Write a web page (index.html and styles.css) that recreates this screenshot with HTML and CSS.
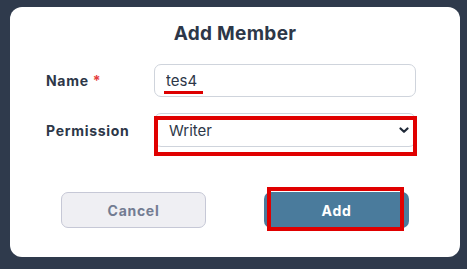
FILE: index.html
```html
<!DOCTYPE html>
<html>
<head>
<meta charset="utf-8">
<link rel="stylesheet" href="styles.css">
</head>
<body>
<div class="modal">
  <h2 class="title">Add Member</h2>
  <div class="form">
    <div class="row">
      <label class="label">Name <span class="req">*</span></label>
      <div class="field">
        <input class="input" type="text" value="tes4">
        <span class="mark-underline"></span>
      </div>
    </div>
    <div class="row row-second">
      <label class="label">Permission</label>
      <div class="field">
        <select class="select">
          <option>Writer</option>
        </select>
        <svg class="chev" width="10" height="7" viewBox="0 0 10 7"><path d="M1.5 1.5 L5 4.8 L8.5 1.5" fill="none" stroke="#1f2937" stroke-width="2.2" stroke-linecap="round" stroke-linejoin="round"/></svg>
        <span class="mark-box mark-select"></span>
      </div>
    </div>
  </div>
  <div class="actions">
    <button class="btn btn-cancel">Cancel</button>
    <div class="btn-wrap">
      <button class="btn btn-add">Add</button>
      <span class="mark-box mark-add"></span>
    </div>
  </div>
</div>
</body>
</html>
```
FILE: styles.css
```css
html, body {
  margin: 0;
  padding: 0;
}
body {
  background: #2f3a4c;
  width: 467px;
  height: 269px;
  overflow: hidden;
  font-family: Inter, "Noto Sans", sans-serif;
  padding-top: 7px;
  box-sizing: border-box;
}
.modal {
  margin-left: 10px;
  width: 450px;
  height: 250px;
  background: #ffffff;
  border-radius: 12px;
  box-sizing: border-box;
  padding: 13px 44px 0 36px;
}
.title {
  margin: 0;
  text-align: center;
  font-size: 19px;
  line-height: 28px;
  font-weight: 700;
  color: #2d3748;
  padding-left: 8px;
  letter-spacing: 0.3px;
}
.form {
  margin-top: 16px;
}
.row {
  display: grid;
  grid-template-columns: 108px 262px;
  align-items: center;
}
.row-second {
  margin-top: 16px;
}
.label {
  font-size: 14px;
  font-weight: 700;
  color: #2d3748;
  letter-spacing: 0.7px;
}
.req {
  color: #e53e3e;
}
.field {
  position: relative;
  height: 33px;
}
.row-second .field {
  height: 34px;
}
.input, .select {
  display: block;
  width: 100%;
  height: 100%;
  box-sizing: border-box;
  border: 1px solid #cfd4dc;
  border-radius: 7px;
  background: #fff;
  font-family: Inter, "Noto Sans", sans-serif;
  font-size: 15px;
  color: #2d3748;
  padding: 0 11px;
  outline: none;
}
.select {
  -webkit-appearance: none;
  appearance: none;
  padding-left: 14px;
}
.chev {
  position: absolute;
  right: 7px;
  top: 14px;
}
.mark-underline {
  position: absolute;
  left: 10px;
  top: 27px;
  width: 39px;
  height: 3px;
  background: #dd0000;
}
.mark-box {
  position: absolute;
  border: 4px solid #e00000;
  box-sizing: border-box;
}
.mark-select {
  left: 0;
  top: 3px;
  width: 263px;
  height: 40px;
}
.actions {
  display: flex;
  justify-content: center;
  gap: 58px;
  margin-top: 45px;
  padding-left: 8px;
}
.btn {
  width: 145px;
  height: 36px;
  border-radius: 7px;
  font-family: Inter, "Noto Sans", sans-serif;
  font-size: 14px;
  font-weight: 700;
  letter-spacing: 0.7px;
  cursor: pointer;
}
.btn-cancel {
  background: #efeff3;
  border: 1px solid #c6c8d6;
  color: #737c92;
}
.btn-wrap {
  position: relative;
}
.btn-add {
  display: block;
  background: #4a7b9c;
  border: none;
  color: #ffffff;
}
.mark-add {
  left: 3px;
  top: -5px;
  width: 137px;
  height: 44px;
}
```
